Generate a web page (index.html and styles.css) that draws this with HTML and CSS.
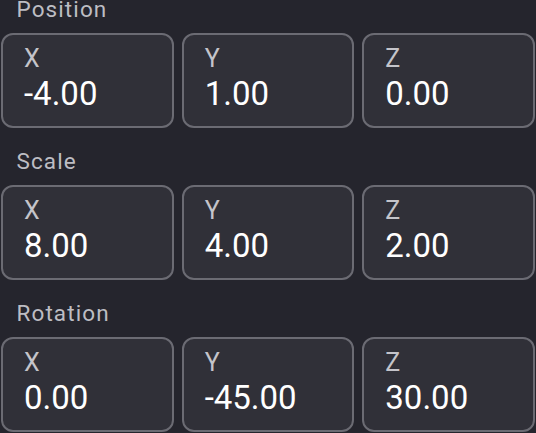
FILE: index.html
```html
<!DOCTYPE html>
<html>
<head>
<meta charset="utf-8">
<link rel="stylesheet" href="styles.css">
</head>
<body>
<div class="panel">
  <section class="group">
    <div class="group-title">Position</div>
    <div class="fields">
      <div class="field"><div class="axis">X</div><div class="value">-4.00</div></div>
      <div class="field"><div class="axis">Y</div><div class="value">1.00</div></div>
      <div class="field"><div class="axis">Z</div><div class="value">0.00</div></div>
    </div>
  </section>
  <section class="group">
    <div class="group-title">Scale</div>
    <div class="fields">
      <div class="field"><div class="axis">X</div><div class="value">8.00</div></div>
      <div class="field"><div class="axis">Y</div><div class="value">4.00</div></div>
      <div class="field"><div class="axis">Z</div><div class="value">2.00</div></div>
    </div>
  </section>
  <section class="group">
    <div class="group-title">Rotation</div>
    <div class="fields">
      <div class="field"><div class="axis">X</div><div class="value">0.00</div></div>
      <div class="field"><div class="axis">Y</div><div class="value">-45.00</div></div>
      <div class="field"><div class="axis">Z</div><div class="value">30.00</div></div>
    </div>
  </section>
</div>
</body>
</html>
```
FILE: styles.css
```css
html, body {
  margin: 0;
  padding: 0;
  background: #25252d;
}
body {
  font-family: Roboto, "Liberation Sans", sans-serif;
  overflow: hidden;
}
.panel {
  display: flex;
  flex-direction: column;
  gap: 19px;
  padding: 0 1px;
  margin-top: -5px;
}
.group-title {
  color: #bdbdc3;
  font-size: 22.5px;
  letter-spacing: 1.1px;
  line-height: 28px;
  padding-left: 15.5px;
  margin-bottom: 10px;
}
.fields {
  display: grid;
  grid-template-columns: 1fr 1fr 1fr;
  gap: 8px;
}
.field {
  background: #303038;
  border: 2px solid #6b6b73;
  border-radius: 12px;
  height: 95px;
  box-sizing: border-box;
  padding: 9px 0 0 21px;
}
.axis {
  color: #c4c4ca;
  font-size: 25px;
  line-height: 30px;
}
.value {
  color: #ffffff;
  font-size: 33px;
  line-height: 36px;
  margin-top: 1.5px;
}
```
